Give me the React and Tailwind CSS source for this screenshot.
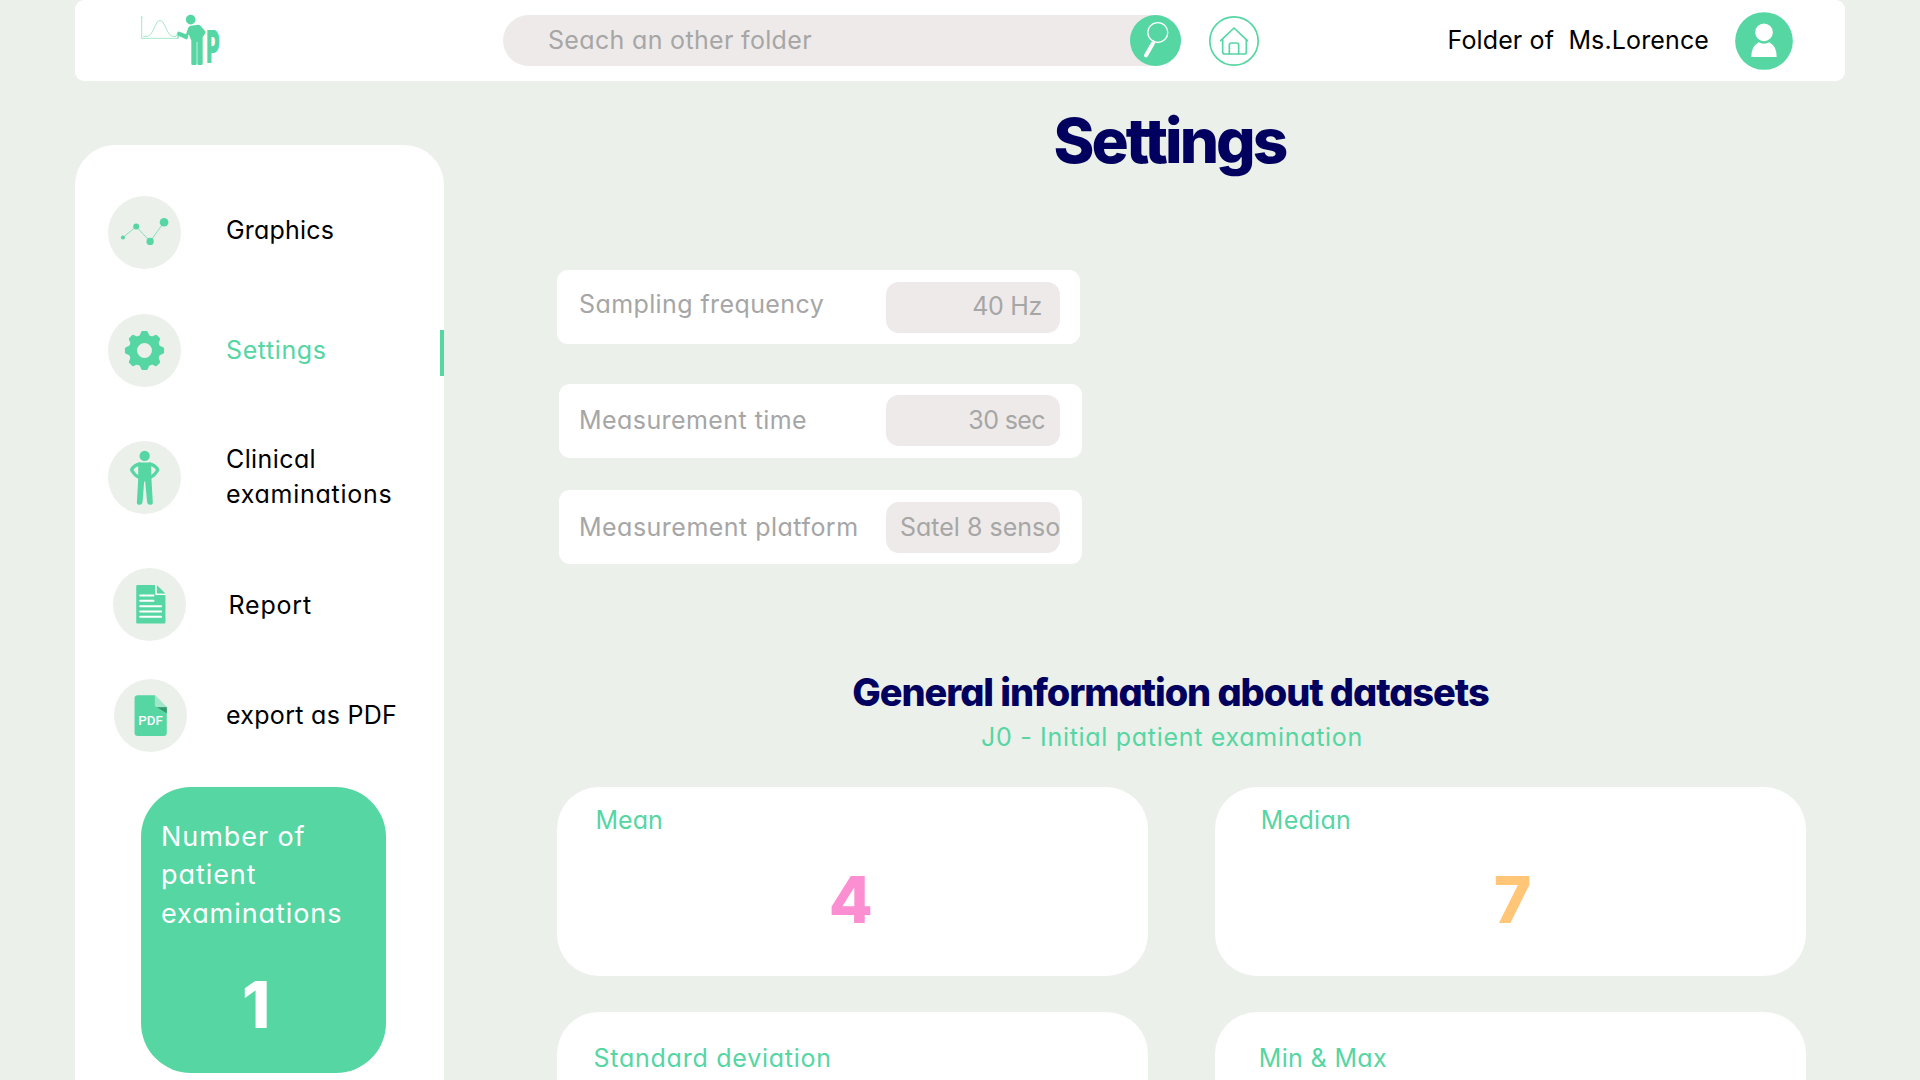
const GREEN = "#55d6a3";

function Logo() {
  return (
    <svg className="h-[65px] w-[100px] overflow-visible" viewBox="0 0 300 195" fill={GREEN}>
      <path d="M17 36h6M20 36v64h112" fill="none" stroke={GREEN} strokeWidth="2.5" opacity="0.65" />
      <path d="M25 94h12c17 0 24-48 38-48s22 48 38 48h10l5-10" fill="none" stroke={GREEN} strokeWidth="2.5" opacity="0.65" />
      <circle cx="167" cy="44" r="14.5" />
      <path d="M127 80q1-5 6-4l20 8 6-18q2-8 9-8l22-3q4 0 7 4l13 15q3 4 0 8l-7 10v80q0 4-4 4h-8q-4 0-4-4v-65h-2v65q0 4-4 4h-8q-4 0-4-4v-69l-8-20-3 13q-1 4-5 3l-21-10-4 9z" transform="translate(0 4)" />
      <text x="0" y="0" transform="translate(214 173) scale(0.46 1)" fontFamily="Inter" fontWeight="900" fontSize="134">P</text>
    </svg>
  );
}

function SearchIcon() {
  return (
    <svg className="size-[51px]" viewBox="29 31 154 154">
      <circle cx="106" cy="108" r="77" fill={GREEN} />
      <circle cx="113" cy="84" r="30" fill="none" stroke="#fff" strokeWidth="4" />
      <path d="M103 109l-5 10" stroke="#fff" strokeWidth="7" />
      <path d="M98 117L77 153" stroke="#fff" strokeWidth="12" strokeLinecap="round" />
    </svg>
  );
}

function HomeIcon() {
  return (
    <svg className="size-[50px]" viewBox="267 35 150 150" fill="none" stroke={GREEN} strokeWidth="5" strokeLinecap="round" strokeLinejoin="round">
      <circle cx="342" cy="110" r="72.5" strokeWidth="5" />
      <path d="M302 109l40-38 40 38" />
      <path d="M308 106v37q0 6 6 6h59q6 0 6-6v-37" />
      <path d="M328 148v-26q0-6 6-6h16q6 0 6 6v26" />
    </svg>
  );
}

function Avatar() {
  return (
    <svg className="size-[58px]" viewBox="1004 35 174 174">
      <circle cx="1091" cy="122" r="86.5" fill={GREEN} />
      <circle cx="1091" cy="96" r="26.5" fill="#fff" />
      <path d="M1053 170q-1-31 22-44 16 8 32 0 23 13 22 44z" fill="#fff" />
    </svg>
  );
}

function GraphIcon() {
  return (
    <svg className="size-full" viewBox="114 197 220 220" fill={GREEN}>
      <path d="M159 322l40-33 42 45 42-58" fill="none" stroke={GREEN} strokeWidth="2" />
      <circle cx="159" cy="322" r="6" />
      <circle cx="199" cy="289" r="9" />
      <circle cx="241" cy="334" r="11" />
      <circle cx="283" cy="276" r="13" />
    </svg>
  );
}

function GearIcon() {
  return (
    <svg className="size-full" viewBox="115 551 220 220" fill={GREEN}>
      <circle cx="225" cy="661" r="35" fill="none" stroke={GREEN} strokeWidth="25" />
      {[0, 45, 90, 135, 180, 225, 270, 315].map((a) => (
        <path key={a} d="M207 620l4-5 4-10q1-3 4-3h12q3 0 4 3l4 10 4 5z" transform={`rotate(${a} 225 661)`} />
      ))}
    </svg>
  );
}

function BodyIcon() {
  return (
    <svg className="size-full" viewBox="114 931 220 220" fill={GREEN}>
      <circle cx="224.5" cy="976" r="15.5" />
      <path d="M205 996h39l1 50 4 70q0 7-8 7t-9-7l-6-63h-3l-5 63q-1 7-9 7t-8-7l4-70z" />
      <path d="M212 1000q-20 3-27 18 8 16 24 23M237 1000q20 3 27 18-8 16-24 23" fill="none" stroke={GREEN} strokeWidth="10" strokeLinejoin="round" />
    </svg>
  );
}

function ReportIcon() {
  return (
    <svg className="size-full" viewBox="128 112 220 220">
      <path d="M201 163h55v30h30v83q0 3-3 3h-82q-3 0-3-3V166q0-3 3-3z" fill={GREEN} />
      <path d="M260 163l26 26h-23q-3 0-3-3z" fill={GREEN} />
      <path d="M257 163v26q0 3 3 3h26" fill="none" stroke="#fff" strokeWidth="3" />
      <path d="M210 195h40M210 211h40M210 227h63M210 243h63M210 259h63" stroke="#fff" strokeWidth="6" strokeLinecap="round" />
    </svg>
  );
}

function PdfIcon() {
  return (
    <svg className="size-full" viewBox="132 446 220 220">
      <path d="M204 495h51l36 36v77q0 10-10 10h-77q-10 0-10-10v-103q0-10 10-10z" fill={GREEN} />
      <path d="M255 495l36 36h-28q-8 0-8-8z" fill="#a1e7cb" />
      <path d="M261 531h30v18z" fill="#37986f" />
      <text x="205" y="585" textLength="74" lengthAdjust="spacingAndGlyphs" fontFamily="Roboto" fontWeight="500" fontSize="38" fill="#fff">PDF</text>
    </svg>
  );
}

function NavItem({ icon, children, className = "", label = "", active }) {
  return (
    <div className={`flex h-[73px] items-center ${className}`}>
      <div className="size-[73px] shrink-0 rounded-full bg-[#ebf0ea]">{icon}</div>
      <div className={`text-[25px] leading-[35px] ${active ? "text-[#55d6a3]" : "text-black"} ${label}`}>{children}</div>
      {active && <div className="mt-[5px] ml-auto h-[46px] w-[4px] bg-[#55d6a3]" />}
    </div>
  );
}

function Field({ label, value, className = "", labelClass = "", boxClass = "" }) {
  return (
    <div className={`flex h-[74px] w-[523px] items-start rounded-[11px] bg-white text-[25px] text-[#a6a6a6] ${className}`}>
      <div className={`flex-1 whitespace-nowrap leading-[36px] ${labelClass}`}>{label}</div>
      <div className={`h-[51px] w-[174px] shrink-0 overflow-hidden whitespace-nowrap rounded-[13px] bg-[#eeeae9] leading-[36px] ${boxClass}`}>{value}</div>
    </div>
  );
}

function Stat({ label, value, labelClass = "", valueClass = "" }) {
  return (
    <div className="h-[188.5px] rounded-[42px] bg-white">
      <div className={`text-[25px] leading-[36px] text-[#55d6a3] ${labelClass}`}>{label}</div>
      {value && <div className={`mt-[37.5px] text-center text-[64px] leading-[48px] font-extrabold ${valueClass}`}>{value}</div>}
    </div>
  );
}

export default function App() {
  return (
    <div className="flex h-[1080px] w-[1920px] flex-col overflow-hidden bg-[#ebf0ea] font-[Inter,sans-serif] [font-feature-settings:'cv11']">
      <header className="mx-[75px] flex h-[81px] shrink-0 items-start rounded-[9px] bg-white">
        <div className="mt-[5px] ml-[60px]"><Logo /></div>
        <div className="mt-[15px] ml-[268px] flex h-[51px] w-[678px] items-center justify-between rounded-full bg-[#eeeae9] pl-[45px]">
          <span className="mb-px text-[25px] leading-[36px] tracking-[0.33px] text-[#a6a6a6]">Seach an other folder</span>
          <SearchIcon />
        </div>
        <div className="mt-[16px] ml-[28px]"><HomeIcon /></div>
        <div className="mt-[22px] mr-[26px] ml-auto text-[25px] leading-[36px] tracking-[0.13px] text-black">{"Folder of\u00a0 Ms.Lorence"}</div>
        <div className="mt-[11.5px] mr-[52px]"><Avatar /></div>
      </header>

      <div className="flex flex-1">
        <aside className="mt-[63.5px] ml-[75px] w-[369px] shrink-0 rounded-t-[40px] bg-white pt-[51.5px]">
          <NavItem className="ml-[33px]" icon={<GraphIcon />} label="ml-[45px] mb-[4px] tracking-[0.2px]">Graphics</NavItem>
          <NavItem className="mt-[45px] ml-[33px]" icon={<GearIcon />} label="ml-[45px] tracking-[0.6px]" active>Settings</NavItem>
          <NavItem className="mt-[54px] ml-[33px]" icon={<BodyIcon />} label="ml-[45px] mb-px tracking-[0.73px]">
            <span className="tracking-[0.4px]">Clinical</span><br />examinations
          </NavItem>
          <NavItem className="mt-[53.5px] ml-[38px]" icon={<ReportIcon />} label="ml-[42.5px] mt-[2px] tracking-[0.8px]">Report</NavItem>
          <NavItem className="mt-[38.5px] ml-[39px]" icon={<PdfIcon />} label="ml-[39px] tracking-[0.3px]">export as PDF</NavItem>
          <div className="mt-[35px] ml-[66px] h-[286px] w-[245px] rounded-[50px] bg-[#55d6a3] pt-[30.5px] text-white">
            <div className="ml-[20px] text-[27px] leading-[38.5px] tracking-[0.93px]">Number of<br />patient<br />examinations</div>
            <div className="mt-[47.5px] pr-[15px] text-center text-[64px] leading-[48px] font-extrabold">1</div>
          </div>
        </aside>

        <main className="flex-1 pl-[113px]">
          <h1 className="mt-[40px] w-[1225px] text-center text-[62px] leading-[40px] font-extrabold tracking-[-2.9px] text-[#02005f]">Settings</h1>
          <Field className="mt-[109px]" label="Sampling frequency" value="40 Hz" labelClass="pl-[22px] pt-[16px] tracking-[0.4px]" boxClass="mt-[12px] mr-[20px] pt-[6px] pr-[18px] text-right tracking-[-0.3px]" />
          <Field className="mt-[39.5px] ml-[2px]" label="Measurement time" value="30 sec" labelClass="pl-[20px] pt-[18px] tracking-[0.43px]" boxClass="mt-[11.5px] mr-[22px] pt-[7px] pr-[15px] text-right tracking-[-0.6px]" />
          <Field className="mt-[32.5px] ml-[2px]" label="Measurement platform" value="Satel 8 senso" labelClass="pl-[20px] pt-[19px] tracking-[0.48px]" boxClass="mt-[12px] mr-[22px] pt-[7px] pl-[14px]" />
          <h2 className="mt-[107.5px] w-[1227px] text-center text-[38px] leading-[40px] font-extrabold tracking-[-1.08px] text-[#02005f]">General information about datasets</h2>
          <p className="mt-[7.5px] w-[1230px] text-center text-[25px] leading-[36px] tracking-[0.7px] text-[#55d6a3]">J0 - Initial patient examination</p>
          <div className="mt-[32px] grid w-[1249px] grid-cols-2 gap-x-[67.5px] gap-y-[36px]">
            <Stat label="Mean" value="4" labelClass="pt-[15px] pl-[38.5px]" valueClass="text-[#fb8fd1] pr-[3px]" />
            <Stat label="Median" value="7" labelClass="pt-[15px] pl-[45.5px] tracking-[0.3px]" valueClass="text-[#ffc677] pl-[4px]" />
            <Stat label="Standard deviation" labelClass="pt-[28px] pl-[36.5px] tracking-[0.75px]" />
            <Stat label="Min & Max" labelClass="pt-[28px] pl-[43.5px] tracking-[0.35px]" />
          </div>
        </main>
      </div>
    </div>
  );
}
